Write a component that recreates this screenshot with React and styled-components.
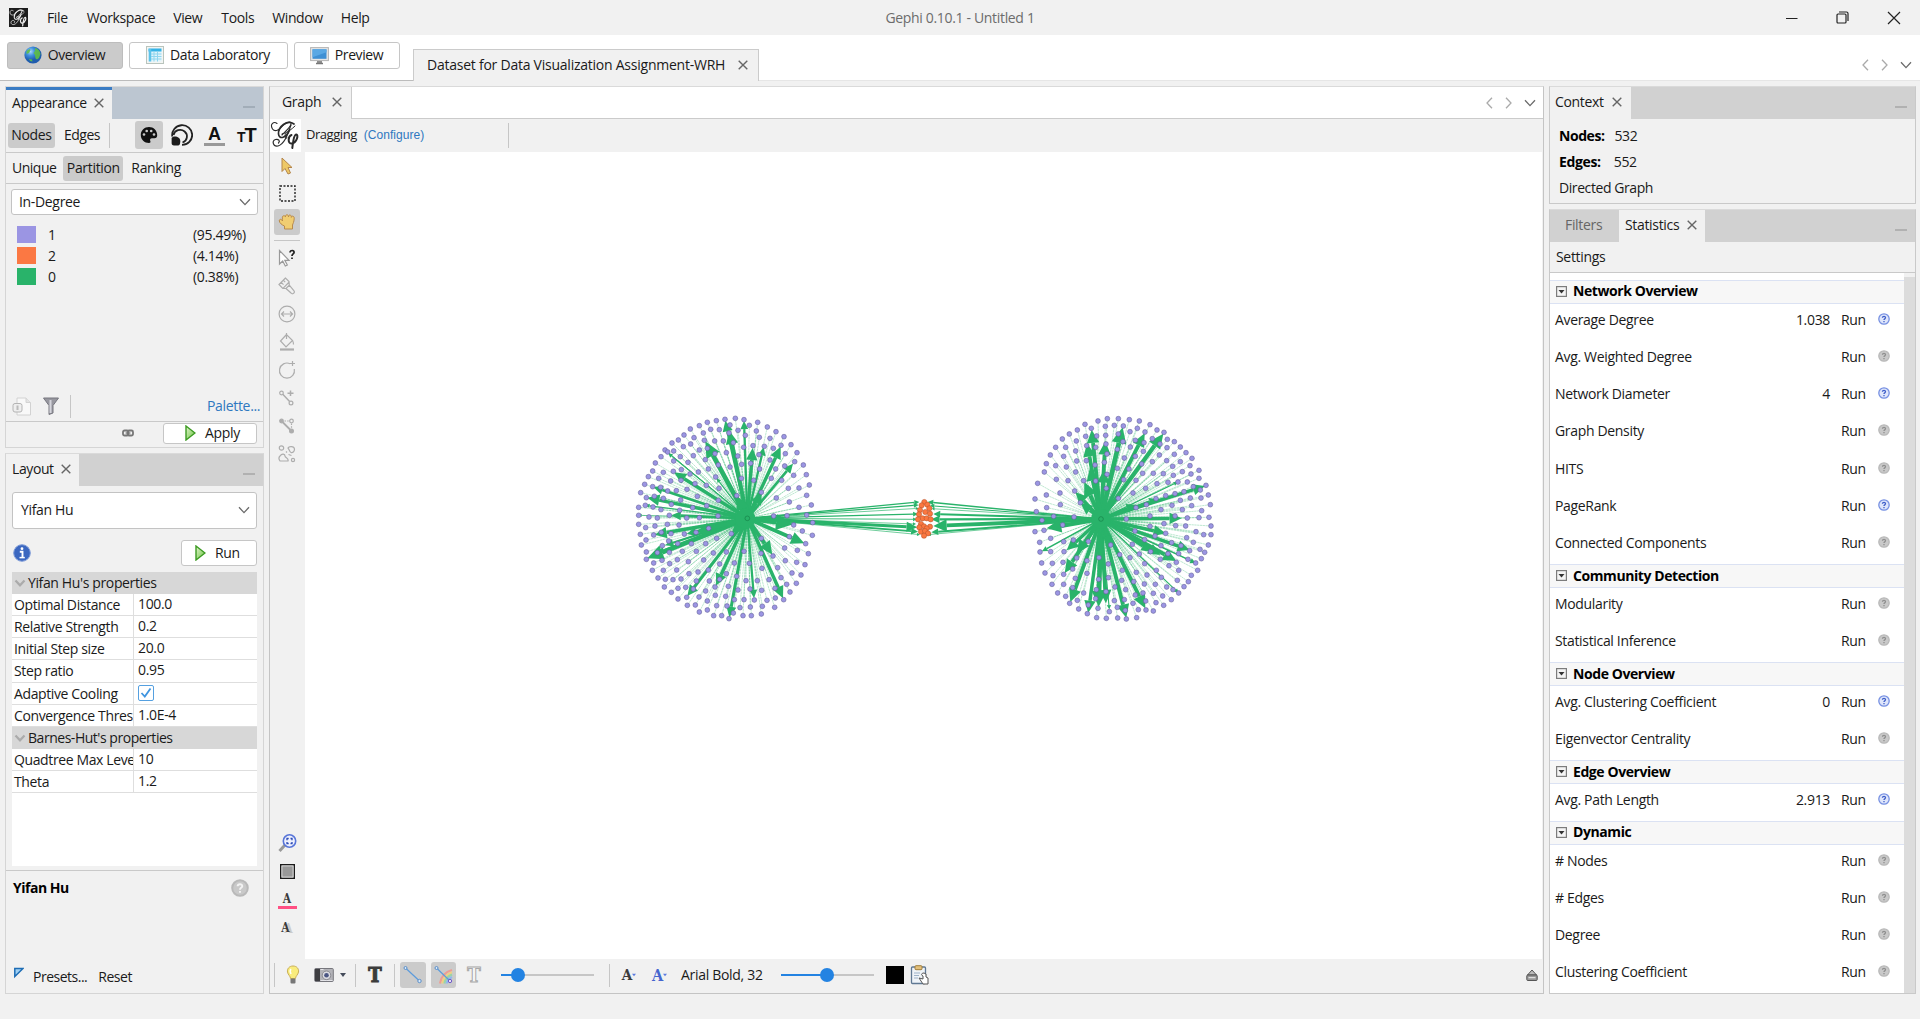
import React from "react";
import styled, { createGlobalStyle, css } from "styled-components";

const Global = createGlobalStyle`
  *, *::before, *::after { box-sizing: border-box; }
  html, body { margin: 0; padding: 0; overflow: hidden; background: #f1f1f1; }
  body { font-family: "Open Sans", "Noto Sans", sans-serif; font-size: 14px; letter-spacing: -0.33px; color: #1a1a1a; line-height: 18px; }
  svg { display: block; flex: none; }
`;

const Window = styled.div`width: 1920px; height: 1019px; display: flex; flex-direction: column; background: #f1f1f1; white-space: nowrap;`;
const Text = styled.span`
  margin-left: ${(p) => p.$ml || 0}px;
  letter-spacing: ${(p) => (p.$ls === undefined ? "inherit" : p.$ls + "px")};
  ${(p) => p.$bold && css`font-weight: 700; color: #000;`}
`;
const Spacer = styled.div`flex: ${(p) => (p.$w || p.$h ? "none" : 1)}; width: ${(p) => p.$w || 0}px; height: ${(p) => p.$h || 0}px;`;

/* title bar and main toolbar */
const TitleBar = styled.header`height: 35px; flex: none; display: grid; grid-template-columns: 800px 320px 800px; align-items: center;`;
const Menu = styled.nav`display: flex; align-items: center; padding-left: 9px;`;
const Title = styled.div`text-align: center; color: #6c6c6c;`;
const Controls = styled.div`display: flex; justify-content: flex-end; align-items: center; gap: 38px; padding-right: 19px;`;
const MainBar = styled.div`height: 46px; flex: none; display: flex; align-items: stretch; background: #fff;`;
const Perspectives = styled.div`width: 413px; flex: none; display: flex; gap: 6px; padding: 7px 0 0 7px; border-bottom: 1px solid #bcbcbc;`;
const Perspective = styled.button`
  height: 27px; width: ${(p) => p.$w}px; padding: 0 1px 1px 0; display: flex; align-items: center; justify-content: center; gap: 6px;
  border: 1px solid ${(p) => (p.$on ? "#bdbdbd" : "#c6c6c6")}; border-radius: 3px; background: ${(p) => (p.$on ? "#cbcbcb" : "#fff")};
  font: inherit; letter-spacing: -0.42px; color: inherit;
`;
const DocTab = styled.div`
  margin-top: 14px; width: 346px; flex: none; display: flex; align-items: center; justify-content: space-between;
  padding: 0 10px 1px 13px; background: #f1f1f1; border: 1px solid #cbcbcb; border-bottom: 0; letter-spacing: -0.24px;
`;
const DocRest = styled.div`flex: 1; display: flex; justify-content: flex-end; padding: 24px 8px 0 0; border-bottom: 1px solid #e6e6e6;`;

/* docked panels */
const Desk = styled.main`height: 908px; flex: none; display: grid; grid-template-columns: 259px 1275px 367px; gap: 5px; padding-left: 5px; padding-top: 5px; margin-bottom: 25px;`;
const Column = styled.div`display: flex; flex-direction: column; gap: 5px; min-height: 0;`;
const Panel = styled.section`
  height: ${(p) => p.$h}px; flex: none; display: flex; flex-direction: column;
  border: 1px solid ${(p) => p.$edge || "#c9c9c9"}; border-top-color: #dadada; background: #f1f1f1;
`;
const TabStrip = styled.div`height: ${(p) => p.$h || 32}px; flex: none; display: flex; background: ${(p) => p.$bg || "#d1d1d1"}; ${(p) => p.$line && css`border-bottom: 1px solid #cbcbcb;`}`;
const Tab = styled.div`
  width: ${(p) => p.$w}px; display: flex; align-items: center; padding: 0 0 2px ${(p) => p.$pl || 6}px; gap: ${(p) => p.$gap || 8}px;
  background: ${(p) => (p.$off ? "transparent" : "#f1f1f1")}; color: ${(p) => (p.$off ? "#666" : "#1a1a1a")};
  ${(p) => p.$focus && css`border-top: 3px solid #3a7cc4; padding-bottom: 4px;`}
  ${(p) => p.$line && css`border-right: 1px solid #cbcbcb; margin-bottom: -1px;`}
`;
const Minimise = styled.div`margin: 19px 8px 0 auto; width: 12px; height: 2px; background: ${(p) => p.$c || "#b1b1b1"};`;
const Row = styled.div`
  display: flex; flex: none; align-items: center; height: ${(p) => p.$h}px; padding: ${(p) => p.$p || "0"};
  ${(p) => p.$line && css`border-bottom: 1px solid #c9c9c9;`}
`;
const Toggle = styled.div`
  height: ${(p) => p.$h || 25}px; width: ${(p) => p.$w}px; display: flex; align-items: center; justify-content: center; flex: none;
  border-radius: 3px; background: ${(p) => (p.$on ? "#cbcbcb" : "transparent")};
`;
const VLine = styled.div`width: 1px; height: ${(p) => p.$h || 25}px; flex: none; background: #c6c6c6; margin-left: ${(p) => p.$ml || 0}px;`;
const Combo = styled.div`
  height: ${(p) => p.$h}px; margin: ${(p) => p.$m}; padding: 0 6px 1px ${(p) => p.$pl || 7}px; display: flex; flex: none; align-items: center; justify-content: space-between;
  background: #fff; border: 1px solid #c3c3c3; border-radius: 3px;
`;
const LegendRow = styled.div`display: grid; grid-template-columns: 19px 133px auto; column-gap: 12px; align-items: center; height: 21px; padding-left: 11px; flex: none;`;
const Swatch = styled.i`height: 17px; background: ${(p) => p.$c};`;
const Link = styled.span`
  color: #2f78c0; margin-left: ${(p) => p.$ml || 0}px;
  ${(p) => p.$small && css`font: 12px "Liberation Sans", sans-serif; letter-spacing: 0.04px; margin-top: -1px;`}
`;
const ToolName = styled.span`margin: -3px 0 0 5px; font-size: 13px; letter-spacing: -0.45px;`;
const Action = styled.button`
  width: ${(p) => p.$w}px; height: ${(p) => p.$h}px; padding: 0 0 1px ${(p) => p.$pl}px; display: flex; align-items: center; gap: 9px;
  background: #fff; border: 1px solid #c6c6c6; border-radius: 3px; font: inherit; letter-spacing: inherit; color: inherit;
`;
const Sheet = styled.div`margin: 6px 6px 0 6px; height: 294px; background: #fff; flex: none;`;
const GroupRow = styled.div`height: 22px; display: flex; align-items: center; gap: 2px; padding-left: 2px; background: #d7d7d7; letter-spacing: ${(p) => p.$ls || -0.45}px;`;
const PropRow = styled.div`height: 22.13px; display: grid; grid-template-columns: 122px 1fr; border-bottom: 1px solid #dedede;`;
const PropName = styled.div`padding: 2px 0 0 2px; overflow: hidden; border-right: 1px solid #dedede; letter-spacing: -0.38px;`;
const PropValue = styled.div`padding: 1px 0 0 4px; display: flex; align-items: flex-start;`;
const CheckBox = styled.div`width: 16px; height: 16px; margin-top: 1px; border: 1px solid #55a0e0; border-radius: 2px; display: flex; align-items: center; justify-content: center;`;

/* graph panel */
const Work = styled.div`height: 807px; flex: none; display: flex;`;
const Rail = styled.div`width: 35px; flex: none; display: flex; flex-direction: column; align-items: center; padding-right: 1px;`;
const Tool = styled.div`
  width: 26px; height: ${(p) => p.$h || 28}px; display: flex; align-items: center; justify-content: center; flex: none;
  ${(p) => p.$on && css`height: 26px; background: #cbcbcb; border-radius: 3px; margin: 1px 0;`}
`;
const RailLine = styled.div`width: 26px; height: 1px; margin: 4px 0 3px; background: #c6c6c6; flex: none;`;
const LogoBox = styled.div`width: 31px; height: 33px; background: #fff; flex: none;`;
const BottomBar = styled.div`height: 34px; flex: none; display: flex; align-items: center; padding-bottom: 2px;`;
const Cell = styled.div`
  width: ${(p) => p.$w}px; margin-left: ${(p) => p.$ml || 0}px; height: 26px; display: flex; align-items: center; justify-content: center; flex: none;
  ${(p) => p.$on && css`background: #cbcbcb; border-radius: 3px;`}
`;
const Track = styled.div`width: 93px; height: 2px; flex: none; margin-left: ${(p) => p.$ml}px; display: flex; align-items: center; background: #c6c6c6;`;
const Fill = styled.div`height: 2px; width: ${(p) => p.$w}px; background: #2383e2; flex: none;`;
const Knob = styled.div`width: 14px; height: 14px; margin-left: -7px; border-radius: 50%; background: #2383e2; flex: none;`;
const Ink = styled.div`width: 18px; height: 18px; background: #000; flex: none; margin-left: 12px;`;

/* statistics */
const StatBody = styled.div`flex: 1; display: flex; min-height: 0; overflow: hidden;`;
const StatList = styled.div`flex: 1; background: #fff; padding-top: 7px;`;
const Gutter = styled.div`width: 11px; margin-top: 4px; background: #dcdcdc;`;
const StatHead = styled.div`
  height: 23.5px; display: flex; align-items: center; gap: 6px; padding: 0 0 1px 6px; background: #f7f7f7;
  border-top: 1px solid #dbe2f3; border-bottom: 1px solid #dbe2f3; font-weight: 700; color: #000; letter-spacing: -0.42px;
`;
const StatRow = styled.div`height: 37.25px; display: grid; grid-template-columns: 1fr auto 35px 39px; align-items: center; padding: 0 0 5px 5px; & > :nth-child(3) { padding-left: 11px; }`;
const StatIcon = styled.div`padding-left: 13px; margin-top: -2px;`;

const CloseX = ({ s = 10 }) => (
  <svg width={s} height={s} viewBox="0 0 10 10"><path d="M.7 .7 9.3 9.3M9.3 .7 .7 9.3" stroke="#666" strokeWidth="1.4" fill="none" /></svg>
);
const Chevron = ({ d = "down", c = "#6a6a6a", w = 12 }) => (
  <svg width={w} height="12" viewBox="0 0 12 12"><path d={{ down: "M1 3.3 6 8.6 11 3.3", left: "M8 .8 3 6 8 11.2", right: "M4 .8 9 6 4 11.2" }[d]} fill="none" stroke={c} strokeWidth="1.3" /></svg>
);
const GroupMark = () => (
  <svg width="12" height="12" viewBox="0 0 12 12"><path d="M1.500 3.500 6 8.300 10.500 3.500" fill="none" stroke="#ababab" strokeWidth="2.200" /></svg>
);
const Arrows = styled.div`display: flex; gap: 6px; & > :last-child { margin-left: 4px; }`;
const TabArrows = () => (
  <Arrows><Chevron d="left" c="#aaa" /><Chevron d="right" c="#aaa" /><Chevron /></Arrows>
);
const Logo = ({ size, bg, fg }) => (
  <svg width={size} height={size} viewBox="0 0 31 31">
    <rect width="31" height="31" fill={bg} />
    <g fill="none" stroke={fg} strokeLinecap="round">
      <path d="M2.500 10C-.5 5 4 2 7 4.500M2.500 10c2.500 3.500 7 1 10-3C15 4 20 2 21 4c1 3-5 8-9 12" strokeWidth="1.100" />
      <path d="M24 5C17 0 8 8 8.500 15c.5 6 8 4 11-4" strokeWidth="1.700" />
      <path d="M21 6c-3 8-6 19-13 21-5 1-6.500-5-2.500-6.500 3-.8 5 1.500 3 3.500" strokeWidth="1.200" />
      <path d="M12 15c5-1 10-5 13-8M16 14c-2 3-1 6 1 5" strokeWidth="1" />
      <path d="M21.500 16C18 17 17.500 25 21.500 24.500 27 24 29 15 26 15.500 23.500 16 23 24 22.300 29" strokeWidth="2" />
    </g>
  </svg>
);
const Play = () => (
  <svg width="11" height="16" viewBox="0 0 11 16"><defs><linearGradient id="play" x1="0" x2="1" y1="0" y2="1"><stop offset="0" stopColor="#e4f7cf" /><stop offset="1" stopColor="#66bf3c" /></linearGradient></defs><path d="M1 1 10 8 1 15Z" fill="url(#play)" stroke="#3c9a22" strokeWidth="1.4" /></svg>
);
const Help = ({ on, s = 12 }) => (
  <svg width={s} height={s} viewBox="0 0 12 12">
    <circle cx="6" cy="6" r="5.200" fill={on ? "#dfe6fb" : "#c9c9c9"} stroke={on ? "#7690e2" : "#b9b9b9"} strokeWidth="1.300" />
    <path d="M4.400 4.800C4.500 3 7.600 3 7.500 4.800 7.400 6 6 5.800 6 7.100M6 8V9.200" fill="none" stroke={on ? "#3f5fc9" : s > 12 ? "#f3f3f3" : "#8f8f8f"} strokeWidth="1.300" />
  </svg>
);
const Globe = () => (
  <svg width="18" height="18" viewBox="0 0 18 18"><defs><radialGradient id="sea" cx=".35" cy=".3"><stop offset="0" stopColor="#a9d6f9" /><stop offset=".5" stopColor="#3f8fdc" /><stop offset="1" stopColor="#1f5cae" /></radialGradient></defs><circle cx="9" cy="9" r="8.600" fill="url(#sea)" /><path d="M11 2c3 .5 5 3 5.500 6l-1.500 4-2 1.500-1.500-1L11 9 9.500 7 11 5ZM2.500 5l3-2 1 1-1.500 3-2.500 1ZM5 13l3 .5.5 2-2.500-.5Z" fill="#5fbf45" opacity=".9" /></svg>
);
const Sheet18 = () => (
  <svg width="18" height="18" viewBox="0 0 18 18"><rect x=".5" y=".5" width="17" height="17" fill="#f3f5f3" stroke="#b9c4bd" /><rect x="2.500" y="2.500" width="13" height="13" fill="#dff4fb" /><path d="M2.500 4H15.500" stroke="#35b3e6" strokeWidth="3" /><path d="M4 3V15.500" stroke="#5cc3ea" strokeWidth="2.500" /><path d="M8 5V15.500M11.500 5V15.500M5 8H15.500M5 10.500H15.500M5 13H15.500" stroke="#8fd6ef" /></svg>
);
const Monitor = () => (
  <svg width="19" height="19" viewBox="0 0 19 19"><rect x=".6" y="1.600" width="17.800" height="13" fill="#e6e6e6" stroke="#b4b4b4" /><rect x="2.500" y="3.300" width="14" height="9.500" fill="#3f90d4" /><path d="M2.500 3.300h14v3l-14 5Z" fill="#5aa8e4" /><path d="M7 15h5v2H7Z" fill="#8f8f8f" /><path d="M6 17.500h7" stroke="#777" strokeWidth="1.500" /></svg>
);
const Palette = () => (
  <svg width="18" height="18" viewBox="0 0 18 18"><path d="M9 1C4.500 1 .8 4.500 .8 9S4.500 17 9 17c1.300 0 1.800-1 1.300-2-.7-1.400.1-2.700 1.700-2.700h2.500c1.700 0 2.700-1.300 2.700-3C17.200 4.500 13.500 1 9 1Z" fill="#111" /><g fill="#cbcbcb"><circle cx="4" cy="8.500" r="1.300" /><circle cx="6.700" cy="5" r="1.300" /><circle cx="11.200" cy="5" r="1.300" /><circle cx="14" cy="8.500" r="1.300" /></g></svg>
);
const SizeIcon = () => (
  <svg width="22" height="22" viewBox="0 0 22 22"><g fill="none" stroke="#222"><path d="M1.300 12.500A10 9.800 0 1 1 11 20.800" strokeWidth="1.800" /><path d="M2.500 11A6.800 6.500 0 1 1 11.500 18.500" strokeWidth="1.800" /></g><path d="M.6 14C1.500 11.500 9.500 11.500 9.300 17.500 9.200 20 8.500 21.400 7 21.400H3C1.300 21.400 .6 20.500 .6 19Z" fill="#1c1c1c" /></svg>
);
const BigA = styled.span`
  width: 21px; height: 21px; margin-left: 11px; text-align: center; border-bottom: 3px solid #999; color: #111;
  font: 700 18px/18px "Liberation Sans", sans-serif; letter-spacing: 0;
`;
const SizeT = styled.span`margin: 2px 0 0 12px; width: 20px; font: 700 20px/20px "Liberation Sans", sans-serif; letter-spacing: -1px; color: #111; & > small { font-size: 14px; }`;
const SerifA = styled.span`
  font: 700 ${(p) => p.$s || 12}px/13px "DejaVu Serif Condensed", "DejaVu Serif", serif; letter-spacing: 0; color: ${(p) => p.$c || "#3b3b3b"};
  ${(p) => p.$pink && css`width: 19px; height: 16px; text-align: center; border-bottom: 3px solid #ff4f83;`}
  ${(p) => p.$shade && css`margin-left: -3px; text-shadow: 3px 1px 0 #cbcbcb;`}
  ${(p) => p.$outline && css`color: #f8f8f8; -webkit-text-stroke: 1px #a9a9a9;`}
  ${(p) => p.$heavy && css`-webkit-text-stroke: 1px #3b3b3b;`}
`;
const Caret = ({ c = "#444b5a", s = 6 }) => (<svg width={s} height="4" viewBox="0 0 6 4"><path d="M0 0H6L3 4Z" fill={c} /></svg>);

const G = ({ children, w = 18, h = 18, c = "#adadad" }) => (
  <svg width={w} height={h} viewBox="0 0 18 18" fill="none" stroke={c} strokeWidth="1.200">{children}</svg>
);
const railTools = [
  <G key="help" c="#999"><path d="M1.500 1.500V15l3.200-3 2.600 5 2-1-2.500-4.700H11Z" fill="#fff" /><path d="M12 3.500C12.200 .6 16.600 1 16 3.700 15.700 5 14 5 14 7M14 8.500V10" stroke="#222" strokeWidth="1.700" /></G>,
  <G key="brush"><path d="M7.500 1 1 7.500 4.800 11.300 8 11.500 11.300 8.200 11 4.500ZM3.200 5.300 5.500 7.600M5.300 3.200 7.200 5.100M5 11.300 11.200 5M8 11.500 13 16c.8 1 2 1 2.800.2s.8-2-.2-2.800L11.300 8.200" /></G>,
  <G key="sizer"><circle cx="9" cy="9" r="7.900" /><path d="M3.500 9h11M6 6.500 3.500 9 6 11.500M12 6.500 14.500 9 12 11.500" /></G>,
  <G key="paint"><path d="M8.500 1.500 2.500 8l5.500 6 6.500-6.500ZM8.500 0v6M14.500 7.500c1 1.500 1 2 1 4" /><path d="M2 16.500h14" strokeWidth="2.200" /></G>,
  <G key="pencil"><path d="M12 2.700A7.500 7.500 0 1 0 16.300 8M14.500 0v5M12 2.500h5" /></G>,
  <G key="edge"><circle cx="3.500" cy="4" r="1.800" /><circle cx="13" cy="14" r="1.900" /><path d="M4.800 5.300 11.600 12.600M12.500 1.500v5.500M9.500 4.200H15.500" strokeWidth="1.500" /></G>,
  <G key="path"><circle cx="3.500" cy="4" r="1.800" fill="#adadad" /><circle cx="13.500" cy="14" r="1.900" fill="#adadad" /><circle cx="13.500" cy="4" r="1.800" /><path d="M3.500 4 13.500 14" strokeWidth="1.800" /><path d="M6.500 4h5M13.500 6.500v5" strokeDasharray="1.500 1.200" /></G>,
  <G key="heat"><circle cx="3.500" cy="3" r="2.200" /><path d="M10 3c1-2 6-2 6.500 1 0 3-2 4-3.500 3.500S11 4 10 3ZM2 11c2-3 5-2 5 0s4 2 3 5H2c-1.500-2-1-4 0-5ZM8 6.500l1 1M10.500 9.500l3 1" /><circle cx="15" cy="15" r="1.600" /></G>,
];

/* Force layout output. Units are thirds of a pixel. */
const leftHub = [442, 385];
const rightHub = [1503, 387];
const leftNodes = `375,88 406,85 432,89 473,97 349,92 322,97 298,107 271,117 390,105 448,106 502,111 528,125 552,140 573,164 591,188 610,225 619,254 628,285 620,316 634,345 620,375 638,398 637,436 617,461 625,491 615,524 603,555 589,580 570,606 551,629 524,652 484,672 454,677 429,677 400,669 387,686 365,677 341,677 322,660 298,666 286,645 262,646 260,622 234,627 214,607 193,591 174,564 157,541 161,519 139,508 139,486 124,465 121,433 138,450 116,403 137,413 116,376 116,352 136,346 122,308 139,323 134,283 145,260 158,243 166,219 183,200 195,180 216,159 235,150 252,135 310,129 332,118 358,119 387,129 414,121 436,136 469,123 478,142 510,145 282,143 313,151 344,153 370,153 400,158 272,162 250,170 221,183 203,186 241,200 298,180 322,175 345,191 379,188 431,172 459,167 493,169 520,175 543,166 556,191 477,194 413,198 510,210 584,215 554,228 452,220 425,223 221,213 264,217 280,197 316,209 355,225 390,231 244,239 220,244 190,247 176,265 212,273 243,271 270,252 295,246 325,237 347,261 424,265 479,237 527,237 461,271 514,265 545,271 581,256 597,294 565,295 529,324 568,336 597,352 561,377 521,378 581,405 607,423 568,440 592,481 554,474 590,517 556,512 519,498 533,533 576,549 560,583 543,563 507,569 486,535 483,490 484,445 484,307 158,290 182,292 203,303 229,302 261,298 285,281 319,286 357,295 410,317 355,331 292,319 242,330 214,343 190,325 163,319 159,351 183,359 239,361 208,376 278,353 320,347 354,378 298,383 260,384 172,384 147,381 165,408 202,403 237,405 184,427 161,435 213,431 253,432 288,427 326,415 206,453 187,467 233,461 274,461 317,461 350,445 394,431 172,488 208,487 247,484 289,484 340,489 379,486 432,484 186,511 232,509 209,521 265,515 311,510 359,522 403,519 448,520 190,541 230,540 267,551 294,546 325,540 379,551 410,559 196,568 219,569 243,567 289,573 328,573 359,568 438,572 472,572 385,589 345,591 414,600 450,597 485,601 525,595 234,595 257,592 280,597 317,603 297,621 346,616 377,619 403,629 432,629 463,630 501,631 526,624 322,633 350,647 381,648 420,653 451,651 487,649`;
const rightNodes = `622,86 655,86 594,93 688,89 718,93 750,104 771,120 792,127 802,148 823,155 841,171 858,188 876,205 870,227 897,241 897,265 918,286 925,315 931,344 927,382 933,408 933,434 925,465 914,487 904,506 893,541 874,556 865,575 852,590 836,609 814,629 791,646 760,663 738,660 710,683 679,687 653,684 619,685 590,683 562,671 536,657 509,640 497,619 473,609 456,583 435,549 425,519 420,486 419,457 405,425 409,365 405,327 413,280 433,246 439,221 451,195 467,172 487,147 508,132 532,120 555,103 574,115 616,109 643,106 670,108 712,115 690,125 735,126 557,139 590,138 617,136 655,132 529,153 560,167 587,172 618,162 669,155 706,151 732,158 757,146 780,162 801,173 823,193 497,172 527,183 491,199 530,213 559,212 585,225 613,217 621,192 652,178 691,171 730,184 706,199 673,204 778,195 757,215 800,212 841,215 818,229 467,227 499,231 527,246 652,235 687,237 725,222 728,250 760,250 790,251 847,245 873,252 820,256 469,268 504,272 551,272 587,273 621,253 671,269 708,271 771,281 804,277 834,276 862,276 880,290 901,300 852,305 737,295 699,309 619,295 524,303 480,309 439,315 541,338 481,344 440,353 655,325 768,326 797,317 825,311 841,331 871,324 903,324 708,353 739,344 783,359 816,346 875,347 905,362 847,359 461,379 522,381 426,391 432,421 488,405 679,387 750,378 825,378 862,384 897,383 792,401 827,407 857,408 705,423 750,409 765,438 797,430 888,425 911,434 860,443 880,457 734,449 815,458 843,467 783,467 697,463 632,465 452,445 491,455 520,450 565,454 452,485 492,485 530,504 597,503 659,494 718,492 752,485 804,491 836,491 869,482 900,478 864,508 887,519 829,517 781,508 561,512 625,522 690,503 734,521 457,520 489,517 518,537 561,550 491,553 459,557 526,565 491,583 596,568 625,563 667,541 709,547 769,541 807,527 836,541 741,555 784,562 832,571 701,575 665,571 766,583 800,591 819,599 733,582 518,593 551,609 589,599 618,605 645,591 677,599 729,609 760,610 788,618 532,631 565,645 587,626 643,632 673,629 706,615 699,640 737,633 768,638 594,655 628,665 652,652 676,661 715,659`;
const sharedNodes = "973,336 982,344 965,346 988,355 960,360 976,366 990,371 957,373 968,385 954,388 980,385 992,388 963,402 972,409 958,412 990,410 980,415 963,425 975,423 984,430 972,437";
const parse = (s, dx = 0) => s.split(" ").map((p) => p.split(",").map(Number)).map(([x, y]) => [x + dx, y]);
const LEFT = parse(leftNodes);
const RIGHT = parse(rightNodes, 900);
const SHARED = parse(sharedNodes);
/* target x, target y, weight */
const leftHeavy = [[376, 92, 7], [388, 122, 9], [432, 93, 5], [458, 174, 8], [491, 172, 5], [542, 170, 8], [579, 221, 6], [316, 154, 11], [486, 307, 8], [222, 247, 8], [160, 291, 6], [142, 323, 8], [214, 376, 6], [164, 434, 8], [196, 466, 5], [142, 505, 11], [262, 618, 7], [348, 587, 8], [388, 682, 7], [462, 624, 5], [549, 625, 8], [517, 494, 9], [613, 460, 9], [580, 403, 12], [394, 431, 12], [195, 180, 1.5], [205, 190, 2], [350, 265, 2], [260, 432, 6], [172, 488, 4], [136, 346, 2], [116, 376, 1], [410, 317, 10], [288, 427, 9]];
const rightHeavy = [[575, 119, 9], [561, 160, 9], [616, 154, 9], [570, 232, 9], [613, 238, 9], [668, 112, 11], [734, 130, 9], [790, 131, 10], [553, 276, 10], [526, 306, 8], [708, 344, 6], [915, 288, 8], [845, 385, 8], [797, 430, 8], [869, 480, 8], [829, 513, 9], [781, 495, 8], [887, 519, 3], [836, 609, 2], [736, 655, 9], [679, 683, 9], [618, 640, 9], [596, 651, 11], [565, 668, 8], [511, 636, 9], [494, 549, 9], [500, 481, 8], [530, 490, 9], [426, 484, 3], [440, 415, 10], [834, 276, 2], [752, 485, 6], [628, 658, 2], [541, 338, 8], [632, 465, 6], [768, 326, 4]].map(([x, y, w]) => [x + 900, y, w]);
const leftBridge = [[958, 336, 2.5], [956, 345, 2.5], [956, 355, 1], [954, 372, 2.5], [950, 388, 1.5], [948, 402, 1], [952, 412, 7], [954, 425, 4], [960, 434, 1]];
const rightBridge = [[983, 336, 3], [990, 347, 2], [995, 356, 1], [1000, 372, 4], [994, 388, 5], [1000, 408, 9], [994, 427, 4], [984, 434, 1]];

const GREEN = "#29b36a";
const Arrow = ({ from, to }) => {
  const [tx, ty, w] = to;
  const dx = tx - from[0], dy = ty - from[1];
  const len = Math.hypot(dx, dy);
  const ux = dx / len, uy = dy / len;
  const head = Math.min(w * 3.9 + 5, len * 0.8), half = w * 1.75 + 3;
  const bx = tx - ux * head, by = ty - uy * head;
  return (
    <g>
      <line x1={from[0]} y1={from[1]} x2={bx} y2={by} stroke={GREEN} strokeWidth={w * 1.2 + 0.8} />
      <path d={`M${tx} ${ty}L${bx - uy * half} ${by + ux * half}L${bx + uy * half} ${by - ux * half}Z`} fill={GREEN} />
    </g>
  );
};
const Fan = ({ hub, nodes, heavy }) => (
  <g>
    <path d={nodes.map(([x, y]) => `M${hub[0]} ${hub[1]}L${x} ${y}`).join("")} stroke={GREEN} strokeWidth="1.500" opacity=".62" fill="none" strokeDasharray="7 1.5" />
    {heavy.map((t, i) => <Arrow key={i} from={hub} to={t} />)}
  </g>
);
const Dots = ({ nodes, fill, stroke, r }) => nodes.map(([x, y], i) => <circle key={i} cx={x} cy={y} r={r} fill={fill} stroke={stroke} strokeWidth="1.700" />);
const GraphCanvas = () => (
  <svg width="1237" height="807" viewBox="305 152 1237 807">
    <rect x="305" y="152" width="1237" height="807" fill="#fff" />
    <g transform="translate(600 390) scale(.33333)">
      {leftBridge.map((t, i) => <Arrow key={i} from={leftHub} to={t} />)}
      {rightBridge.map((t, i) => <Arrow key={i} from={rightHub} to={t} />)}
      <Fan hub={leftHub} nodes={LEFT} heavy={leftHeavy} />
      <Fan hub={rightHub} nodes={RIGHT} heavy={rightHeavy} />
      <circle cx="436" cy="386" r="30" fill={GREEN} />
      <circle cx="1503" cy="387" r="30" fill={GREEN} />
      <Dots nodes={[...LEFT, ...RIGHT]} fill="#9b95e3" stroke="#625d96" r="7.2" />
      <Dots nodes={SHARED} fill="#fb7740" stroke="#b9552c" r="7.800" />
      <Dots nodes={[leftHub, rightHub]} fill="#29b36a" stroke="#147a44" r="7" />
    </g>
  </svg>
);

const stats = [
  ["Network Overview", [["Average Degree", "1.038", 1], ["Avg. Weighted Degree"], ["Network Diameter", "4", 1], ["Graph Density"], ["HITS"], ["PageRank", "", 1], ["Connected Components"]]],
  ["Community Detection", [["Modularity"], ["Statistical Inference"]]],
  ["Node Overview", [["Avg. Clustering Coefficient", "0", 1], ["Eigenvector Centrality"]]],
  ["Edge Overview", [["Avg. Path Length", "2.913", 1]]],
  ["Dynamic", [["# Nodes"], ["# Edges"], ["Degree"], ["Clustering Coefficient"]]],
];
const props1 = [["Optimal Distance", "100.0"], ["Relative Strength", "0.2"], ["Initial Step size", "20.0"], ["Step ratio", "0.95"], ["Adaptive Cooling", true], ["Convergence Thresl", "1.0E-4"]];
const props2 = [["Quadtree Max Leve", "10"], ["Theta", "1.2"]];
const Props = ({ rows }) => rows.map(([n, v]) => (
  <PropRow key={n}>
    <PropName>{n}</PropName>
    <PropValue>{v === true ? <CheckBox><svg width="12" height="12" viewBox="0 0 12 12"><path d="M1.500 6 4.800 9.500 10.500 1.500" fill="none" stroke="#3f95e0" strokeWidth="1.800" /></svg></CheckBox> : v}</PropValue>
  </PropRow>
));

const Appearance = () => (
  <Panel $h={362} $edge="#d5d5d5">
    <TabStrip $bg="#bcc6d1"><Tab $w={106} $focus $gap={7}><Text $ls={-0.35}>Appearance</Text><CloseX /></Tab><Minimise $c="#a2adb8" /></TabStrip>
    <Row $h={34} $line $p="0 0 1px 2px">
      <Toggle $w={47} $on>Nodes</Toggle><Text $ml={9} $ls={-0.5}>Edges</Text><VLine $ml={9} />
      <Spacer $w={25} /><Toggle $w={28} $h={28} $on><Palette /></Toggle>
      <Spacer $w={8} /><SizeIcon /><BigA>A</BigA><SizeT><small>T</small>T</SizeT>
    </Row>
    <Row $h={31} $line $p="0 0 0 6px"><Text $ls={-0.5}>Unique</Text><Spacer $w={7} /><Toggle $w={60} $on>Partition</Toggle><Text $ml={8}>Ranking</Text></Row>
    <Combo $h={26} $m="5px 5px 9px 5px">In-Degree<Chevron /></Combo>
    <LegendRow><Swatch $c="#9b95e3" /><span>1</span><span>(95.49%)</span></LegendRow>
    <LegendRow><Swatch $c="#fb7843" /><span>2</span><span>(4.14%)</span></LegendRow>
    <LegendRow><Swatch $c="#29b36a" /><span>0</span><span>(0.38%)</span></LegendRow>
    <Spacer />
    <Row $h={31} $line $p="0 0 0 6px">
      <svg width="19" height="19" viewBox="0 0 19 19"><path d="M5 1h9l4.500 4.500V18H5Z" fill="#f8f8f8" stroke="#d2d2d2" /><path d="M14 1v4.500h4.500" fill="#e4e4e4" stroke="#d2d2d2" /><rect x="1" y="6.500" width="9" height="8.500" rx="2" fill="#eee" stroke="#b4b4b4" /><path d="M5.500 8.500v4.500" stroke="#bbb" strokeWidth="2" /></svg>
      <Spacer $w={12} />
      <svg width="16" height="18" viewBox="0 0 16 18"><path d="M.5 1H15.500L10 8.500V16l-4 1.500V8.500Z" fill="#97979f" stroke="#77777f" /><path d="M7.500 3v13" stroke="#d5d5dc" strokeWidth="2" /></svg>
      <VLine $ml={11} $h={23} /><Link $ml={136}>Palette...</Link>
    </Row>
    <Row $h={25} $p="0 6px 3px 0">
      <Spacer />
      <svg width="12" height="8" viewBox="0 0 12 8"><g fill="none" stroke="#777" strokeWidth="1.800"><rect x="1" y="1.500" width="5.500" height="5" rx="1.500" /><rect x="5.500" y="1.500" width="5.500" height="5" rx="1.500" /></g><path d="M3.500 4h5" stroke="#777" /></svg>
      <Spacer $w={29} /><Action $w={94} $h={21} $pl={21}><Play />Apply</Action>
    </Row>
  </Panel>
);

const LayoutPanel = () => (
  <Panel $h={541} $edge="#d5d5d5">
    <TabStrip><Tab $w={73} $gap={7}><Text $ls={-0.4}>Layout</Text><CloseX /></Tab><Minimise /></TabStrip>
    <Combo $h={37} $m="6px 6px 11px 6px" $pl={8}><Text>Yifan Hu</Text><Chevron /></Combo>
    <Row $h={26} $p="0 6px 0 7px">
      <svg width="18" height="18" viewBox="0 0 18 18"><circle cx="9" cy="9" r="8.300" fill="#3b67c0" stroke="#7f9cd8" /><path d="M6.800 7.800H9.500V13.500" stroke="#fff" strokeWidth="1.900" fill="none" /><path d="M6.500 13.600H11.800" stroke="#fff" strokeWidth="1.500" /><circle cx="9" cy="4.700" r="1.400" fill="#fff" /></svg>
      <Spacer /><Action $w={76} $h={26} $pl={13}><Play />Run</Action>
    </Row>
    <Sheet>
      <GroupRow $ls={-0.37}><GroupMark />Yifan Hu's properties</GroupRow>
      <Props rows={props1} />
      <GroupRow $ls={-0.47}><GroupMark />Barnes-Hut's properties</GroupRow>
      <Props rows={props2} />
    </Sheet>
    <Row $h={5} $line $p="0" />
    <Row $h={33} $p="0 14px 0 7px"><Text $bold $ls={-0.5}>Yifan Hu</Text><Spacer /><Help s={18} /></Row>
    <Spacer />
    <Row $h={32} $p="0 0 0 8px">
      <svg width="10" height="20" viewBox="0 0 10 20"><path d="M.8 1.500H9L.8 9.500Z" fill="#9fd0f4" stroke="#1e6db5" strokeWidth="1.500" /></svg>
      <Text $ml={9} $ls={-0.5}>Presets...</Text><Text $ml={11} $ls={-0.45}>Reset</Text>
    </Row>
  </Panel>
);

const GraphPanel = () => (
  <Panel $h={908} $edge="#c4c4c4">
    <TabStrip $bg="#fff" $line $h={32}>
      <Tab $w={82} $pl={12} $gap={11} $line><Text>Graph</Text><CloseX /></Tab>
      <Spacer /><Row $h={32} $p="0 7px 0 0"><TabArrows /></Row>
    </TabStrip>
    <Row $h={33}>
      <LogoBox><Logo size={31} bg="#fff" fg="#2b2b2b" /></LogoBox>
      <ToolName>Dragging</ToolName><Spacer $w={7} /><Link $small>(Configure)</Link><VLine $ml={84} />
    </Row>
    <Work>
      <Rail>
        <Tool $h={27}><svg width="14" height="18" viewBox="0 0 14 18"><path d="M2 1V14.500L5 11.500 8 17l2.500-1L8 10.500H12Z" fill="#eec866" stroke="#b4854a" /></svg></Tool>
        <Tool $h={29}><svg width="17" height="17" viewBox="0 0 17 17"><rect x="1" y="1" width="15" height="15" fill="none" stroke="#222" strokeWidth="1.400" strokeDasharray="2 1.500" /></svg></Tool>
        <Tool $on><svg width="18" height="18" viewBox="0 0 18 18"><path d="M4.500 6.500C4 4 4.500 3 5.500 2.800S7.300 3 7.500 4C7.300 2.500 8 1.800 9 1.800S10.500 2.600 10.500 4c0-1.400.7-2.100 1.500-2 1 .1 1.400 1 1.300 2.300C13.600 3.300 14.300 3 15 3.200c1 .3 1.300 1.300 1.200 2.600C16 9 15 10.500 14.500 12v4H6.500V13C4 12 1.500 10 1.300 8 1 6 3.500 5.500 4.500 8Z" fill="#f0cd72" stroke="#b98a4c" /></svg></Tool>
        <RailLine />
        {railTools.map((t) => <Tool key={t.key}>{t}</Tool>)}
        <Spacer />
        <Tool $h={28}><svg width="19" height="19" viewBox="0 0 19 19"><path d="M7 11 1.500 17" stroke="#999" strokeWidth="3" /><circle cx="11.500" cy="7" r="6.200" fill="#eef1fd" stroke="#5875d8" strokeWidth="1.600" /><path d="M9 6.200V4.500h1.700M12.500 4.500H14V6.200M14 8V9.500H12.500M10.700 9.500H9V8" fill="none" stroke="#2d4bb8" strokeWidth="1.300" /></svg></Tool>
        <Tool $h={29}><svg width="15" height="15" viewBox="0 0 15 15"><rect x=".7" y=".7" width="13.600" height="13.600" fill="#999" stroke="#1b1b1b" strokeWidth="1.400" /><rect x="1.900" y="1.900" width="11.200" height="11.200" fill="none" stroke="#eee" strokeWidth=".8" /></svg></Tool>
        <Tool $h={29}><SerifA $pink>A</SerifA></Tool>
        <Tool $h={26}><SerifA $shade>A</SerifA></Tool>
        <Spacer $h={18} />
      </Rail>
      <GraphCanvas />
    </Work>
    <BottomBar>
      <VLine $ml={4} $h={24} />
      <Cell $w={16} $ml={10}><svg width="14" height="20" viewBox="0 0 14 20"><path d="M7 1C3 1 1 4 1.500 7 2 10 4.500 11 4.500 13.500h5C9.500 11 12 10 12.500 7 13 4 11 1 7 1Z" fill="#f9ec7d" stroke="#c9ae58" /><path d="M5 4c-1 1-1 3 0 5" stroke="#fff" fill="none" strokeWidth="1.500" /><rect x="4.500" y="13.500" width="5" height="5" rx="1" fill="#777" /></svg></Cell>
      <Cell $w={20} $ml={13}><svg width="20" height="16" viewBox="0 0 20 16"><rect x=".7" y="1.500" width="18.600" height="13" rx="1" fill="#b3b3b8" stroke="#77777d" /><rect x="1" y="2" width="5" height="12" fill="#3e3e42" /><path d="M6.500 2.500h3M6.500 13.500h12" stroke="#e4e4e8" /><circle cx="12.500" cy="8.300" r="4.300" fill="#dcdce2" stroke="#88888f" /><circle cx="12.500" cy="8.300" r="2.300" fill="#4b5683" /></svg></Cell>
      <Cell $w={6} $ml={6}><Caret /></Cell>
      <VLine $ml={9} $h={23} />
      <Cell $w={18} $ml={10}><SerifA $s={20} $heavy>T</SerifA></Cell>
      <VLine $ml={10} $h={23} />
      <Cell $w={26} $ml={5} $on><svg width="20" height="20" viewBox="0 0 20 20"><path d="M2.500 3 16.500 16" stroke="#5b9bdc" strokeWidth="1.200" /><circle cx="2.500" cy="3" r="1.500" fill="#d8e9fa" stroke="#5b8fc9" /><circle cx="16.500" cy="16" r="1.700" fill="#d8e9fa" stroke="#5b8fc9" /></svg></Cell>
      <Cell $w={25} $ml={5} $on><svg width="20" height="20" viewBox="0 0 20 20"><g fill="none" strokeWidth="2.200"><path d="M6 18.500C7 12 11 7 18 5" stroke="#ee9d95" /><path d="M8.200 18.500C9 13.500 12 9.500 18 7.300" stroke="#f0cf84" /><path d="M10.400 18.500C11 14.500 13.500 11.500 18 9.600" stroke="#9ad6a6" /><path d="M12.600 18.500C13 15.500 15 13.500 18 12" stroke="#93b8ee" /></g><path d="M2.500 3 16 16" stroke="#5b9bdc" strokeWidth="1.200" /><circle cx="2.500" cy="3" r="1.500" fill="#d8e9fa" stroke="#5b8fc9" /><circle cx="16" cy="16" r="1.700" fill="#e9dff5" stroke="#6e5bc9" /></svg></Cell>
      <Cell $w={18} $ml={9}><SerifA $s={20} $outline>T</SerifA></Cell>
      <Track $ml={18}><Fill $w={17} /><Knob /></Track>
      <VLine $ml={15} $h={23} />
      <Cell $w={18} $ml={10}><SerifA $s={15}>A</SerifA><Caret c="#5b7be0" s={4} /></Cell>
      <Cell $w={19} $ml={12}><SerifA $s={16} $c="#4565cf">A</SerifA><Caret c="#5b7be0" s={4} /></Cell>
      <Text $ml={12} $ls={-0.3}>Arial Bold, 32</Text>
      <Track $ml={18}><Fill $w={46} /><Knob /></Track>
      <Ink />
      <Cell $w={20} $ml={6}><svg width="20" height="20" viewBox="0 0 20 20"><rect x="1.500" y="2" width="14" height="16.500" rx="1" fill="#eef3f8" stroke="#5f7893" strokeWidth="1.300" /><rect x="5" y=".7" width="7" height="4" rx="1" fill="#e3c07c" stroke="#a07e3c" /><path d="M4 8h6M4 10.500h5M4 13h4" stroke="#9db2c8" /><path d="M14 8c-3 0-3 2.500-1 3v3l-4-1 4 6h5v-6l-2-1V9Z" fill="#fff" stroke="#555" /></svg></Cell>
      <Spacer />
      <svg width="12" height="13" viewBox="0 0 12 13"><path d="M6 1 10.500 6H1.500Z" fill="#bbb" stroke="#555" /><rect x=".8" y="6" width="10.400" height="5.500" rx="1" fill="#999" stroke="#555" /><path d="M2.500 8.700h7" stroke="#eee" /></svg>
      <Spacer $w={5} />
    </BottomBar>
  </Panel>
);

const ContextPanel = () => (
  <Panel $h={118}>
    <TabStrip><Tab $w={81} $pl={5} $gap={8}><Text>Context</Text><CloseX /></Tab><Minimise /></TabStrip>
    <Spacer $h={4} />
    <Row $h={26} $p="0 0 0 9px"><Text $bold $ls={-0.45}>Nodes:</Text><Text $ml={10}>532</Text></Row>
    <Row $h={26} $p="0 0 0 9px"><Text $bold $ls={-0.35}>Edges:</Text><Text $ml={13}>552</Text></Row>
    <Row $h={25} $p="0 0 0 9px"><Text $ls={-0.42}>Directed Graph</Text></Row>
  </Panel>
);

const StatisticsPanel = () => (
  <Panel $h={785}>
    <TabStrip><Tab $w={69} $pl={15} $off><Text>Filters</Text></Tab><Tab $w={86} $pl={6}><Text>Statistics</Text><CloseX /></Tab><Minimise /></TabStrip>
    <Row $h={31} $line $p="0 0 1px 6px">Settings</Row>
    <StatBody>
      <StatList>
        {stats.map(([title, rows]) => (
          <div key={title}>
            <StatHead>
              <svg width="11" height="11" viewBox="0 0 11 11"><rect x=".6" y=".6" width="9.800" height="9.800" fill="#f4f4f4" stroke="#7c7c7c" strokeWidth="1.200" /><path d="M2.500 4H8.500L5.500 7.500Z" fill="#333" /></svg>
              {title}
            </StatHead>
            {rows.map(([n, v, on]) => (
              <StatRow key={n}><span>{n}</span><span>{v}</span><span>Run</span><StatIcon><Help on={on} /></StatIcon></StatRow>
            ))}
          </div>
        ))}
      </StatList>
      <Gutter />
    </StatBody>
  </Panel>
);

const menu = [["File", 19], ["Workspace", 19], ["View", 18], ["Tools", 19], ["Window", 18], ["Help", 18]];

export default function App() {
  return (
    <Window>
      <Global />
      <TitleBar>
        <Menu><Logo size={19} bg="#1d1d1d" fg="#eee" />{menu.map(([m, l]) => <Text key={m} $ml={l} $ls={-0.38}>{m}</Text>)}</Menu>
        <Title>Gephi 0.10.1 - Untitled 1</Title>
        <Controls>
          <svg width="12" height="12" viewBox="0 0 12 12"><path d="M0 6.500H11.500" stroke="#222" /></svg>
          <svg width="13" height="13" viewBox="0 0 13 13"><g fill="none" stroke="#222" strokeWidth="1.200"><rect x="1" y="3" width="9" height="9" rx="1" /><path d="M3 1h7.500A1.500 1.500 0 0 1 12 2.500V10" /></g></svg>
          <svg width="14" height="14" viewBox="0 0 14 14"><path d="M1 1 13 13M13 1 1 13" stroke="#222" strokeWidth="1.200" /></svg>
        </Controls>
      </TitleBar>
      <MainBar>
        <Perspectives>
          <Perspective $w={116} $on><Globe />Overview</Perspective>
          <Perspective $w={159}><Sheet18 />Data Laboratory</Perspective>
          <Perspective $w={106}><Monitor />Preview</Perspective>
        </Perspectives>
        <DocTab><Text>Dataset for Data Visualization Assignment-WRH</Text><CloseX /></DocTab>
        <DocRest><TabArrows /></DocRest>
      </MainBar>
      <Desk>
        <Column><Appearance /><LayoutPanel /></Column>
        <Column><GraphPanel /></Column>
        <Column><ContextPanel /><StatisticsPanel /></Column>
      </Desk>
    </Window>
  );
}
